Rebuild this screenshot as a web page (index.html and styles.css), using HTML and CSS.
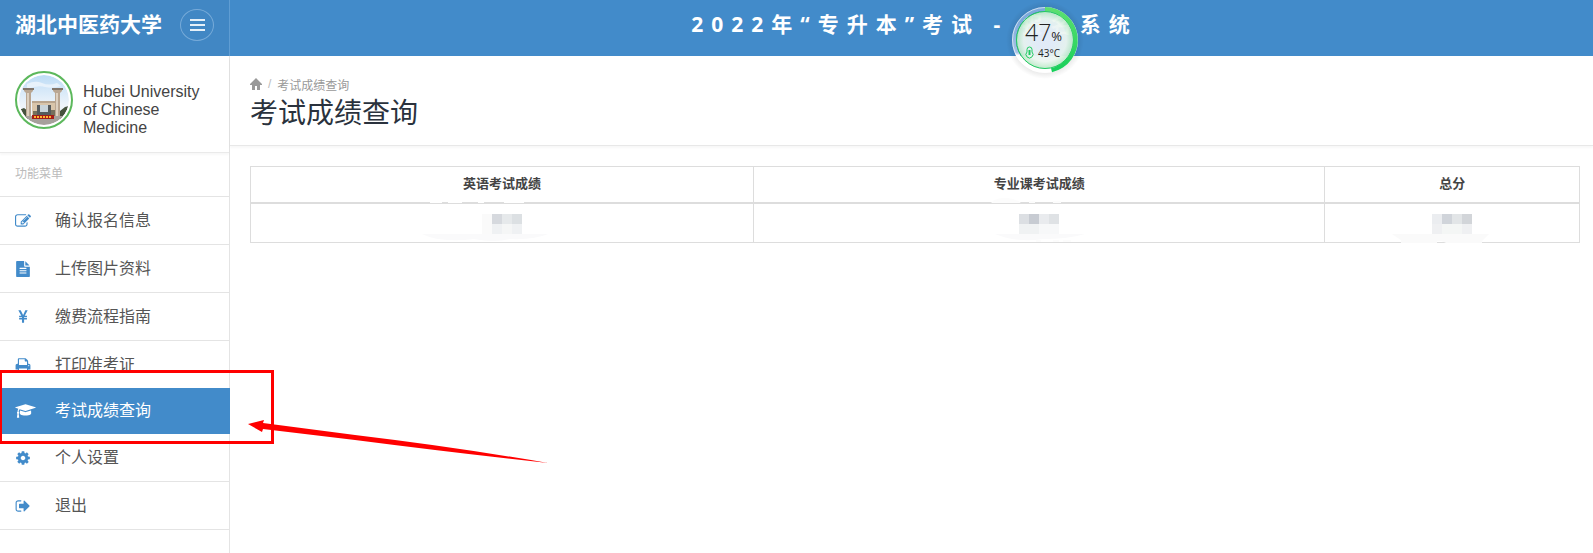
FILE: index.html
```html
<!DOCTYPE html>
<html lang="zh-CN">
<head>
  <meta charset="UTF-8">
  <title>考试成绩查询</title>
  <meta name="viewport" content="width=device-width, initial-scale=1.0">
  <link rel="stylesheet" href="styles.css">
</head>
<body>
  <header class="topbar">
    <div class="brand">
      <a class="brand-name" href="#">湖北中医药大学</a>
      <button class="menu-toggle" type="button" aria-label="菜单">
        <svg width="15" height="12" viewBox="0 0 15 12"><path d="M0 0h15v2H0zM0 5h15v2H0zM0 10h15v2H0z"/></svg>
      </button>
    </div>
    <h3 class="system-title">2022年“专升本”考试 - 报名系统</h3>
  </header>

  <div class="layout">
    <aside class="sidebar">
      <div class="profile">
        <svg class="avatar" viewBox="0 0 50 50" aria-hidden="true">
          <defs>
            <clipPath id="round"><circle cx="25" cy="25" r="25"/></clipPath>
            <linearGradient id="sky" x1="0" y1="0" x2="0" y2="1">
              <stop offset="0" stop-color="#bddcf6"/>
              <stop offset="0.6" stop-color="#eef4fa"/>
            </linearGradient>
          </defs>
          <g clip-path="url(#round)">
            <rect width="50" height="50" fill="url(#sky)"/>
            <path d="M8 9q8-4 15-1t15 0l4 3q-9 3-16 1t-18 2z" fill="#e8f2fb"/>
            <path d="M0 35l5-2 4 3v9H0zM41 36l5-4 4-1v14h-9z" fill="#46523d"/>
            <path d="M13 27h24v14H13z" fill="#d9c5aa"/>
            <path d="M13 26h24v2H13z" fill="#b9a58e"/>
            <path d="M18 30h14v12H18z" fill="#555a5c"/>
            <path d="M21 30h8v7h-8z" fill="#c9d4da"/>
            <path d="M14 36h4v6h-4zM32 35h4v7h-4z" fill="#76705c"/>
            <path d="M5 14h9v2l-2 2v24H7V18l-2-2zM34 14h9v2l-2 2v24h-5V18l-2-2z" fill="#b9a692"/>
            <path d="M8 18h2v24H8zM37 18h2v24h-2z" fill="#ddd0c0"/>
            <path d="M4 13h11v2H4zM33 13h11v2H33z" fill="#82766b"/>
            <path d="M0 41h50v9H0z" fill="#a6a09b"/>
            <path d="M13 40h22v4H13z" fill="#a51d18"/>
            <path d="M15 41h2v2h-2zM18 41h2v2h-2zM21 41h2v2h-2zM24 41h2v2h-2zM27 41h2v2h-2zM30 41h2v2h-2z" fill="#ffb52e"/>
          </g>
        </svg>
        <h4 class="profile-name">Hubei University of Chinese Medicine</h4>
      </div>
      <h5 class="menu-title">功能菜单</h5>
      <ul class="menu">
        <li><a href="#">
          <svg class="icon" viewBox="0 0 1792 1792"><path d="M888 1184l116-116-152-152-116 116v56h96v96h56zm440-720q-16-16-33 1l-350 350q-17 17-1 33t33-1l350-350q17-17 1-33zm80 594v190q0 119-84.5 203.5t-203.5 84.5h-832q-119 0-203.5-84.5t-84.5-203.5v-832q0-119 84.5-203.5t203.5-84.5h832q63 0 117 25 15 7 18 23 3 17-9 29l-49 49q-14 14-32 8-23-6-45-6h-832q-66 0-113 47t-47 113v832q0 66 47 113t113 47h832q66 0 113-47t47-113v-126q0-13 9-22l64-64q15-15 35-7t20 29zm-96-738l288 288-672 672h-288v-288zm444 132l-92 92-288-288 92-92q28-28 68-28t68 28l152 152q28 28 28 68t-28 68z"/></svg>
          <span>确认报名信息</span></a></li>
        <li><a href="#">
          <svg class="icon" viewBox="0 0 1792 1792"><path d="M1596 476q14 14 28 36h-472v-472q22 14 36 28zm-476 164h544v1056q0 40-28 68t-68 28h-1344q-40 0-68-28t-28-68v-1600q0-40 28-68t68-28h800v544q0 40 28 68t68 28zm160 736v-64q0-14-9-23t-23-9h-704q-14 0-23 9t-9 23v64q0 14 9 23t23 9h704q14 0 23-9t9-23zm0-256v-64q0-14-9-23t-23-9h-704q-14 0-23 9t-9 23v64q0 14 9 23t23 9h704q14 0 23-9t9-23zm0-256v-64q0-14-9-23t-23-9h-704q-14 0-23 9t-9 23v64q0 14 9 23t23 9h704q14 0 23-9t9-23z"/></svg>
          <span>上传图片资料</span></a></li>
        <li><a href="#">
          <svg class="icon" viewBox="0 0 1792 1792"><path d="M985.500 1536h-172q-13 0-22.500-9t-9.500-23v-330h-288q-13 0-22.500-9t-9.500-23v-103q0-13 9.500-22.500t22.500-9.500h288v-85h-288q-13 0-22.500-9t-9.500-23v-104q0-13 9.500-22.500t22.500-9.500h214l-321-578q-8-16 0-32 10-16 28-16h194q19 0 29 18l215 425q19 38 56 125 10-24 30.500-68t27.500-61l191-420q8-19 29-19h191q17 0 27 16 9 14 1 31l-313 579h215q13 0 22.500 9.500t9.500 22.500v104q0 14-9.500 23t-22.500 9h-290v85h290q13 0 22.500 9.500t9.500 22.500v103q0 14-9.500 23t-22.500 9h-290v330q0 13-9.500 22.500t-22.500 9.500z"/></svg>
          <span>缴费流程指南</span></a></li>
        <li><a href="#">
          <svg class="icon" viewBox="0 0 1792 1792"><path d="M448 1536h896v-256h-896v256zm0-640h896v-384h-160q-40 0-68-28t-28-68v-160h-640v640zm1152 64q0-26-19-45t-45-19-45 19-19 45 19 45 45 19 45-19 19-45zm128 0v416q0 13-9.500 22.500t-22.500 9.500h-224v160q0 40-28 68t-68 28h-960q-40 0-68-28t-28-68v-160h-224q-13 0-22.500-9.500t-9.500-22.500v-416q0-79 56.500-135.500t135.500-56.500h64v-544q0-40 28-68t68-28h672q40 0 88 20t76 48l152 152q28 28 48 76t20 88v256h64q79 0 135.500 56.500t56.500 135.500z"/></svg>
          <span>打印准考证</span></a></li>
        <li class="active"><a href="#">
          <svg class="icon icon-wide" viewBox="0 0 2304 1792"><path d="M1774 836l18 316q4 69-82 128t-235 93.500-323 34.500-323-34.500-235-93.500-82-128l18-316 574 181q22 7 48 7t48-7zm530-324q0 23-22 31l-1120 352q-4 1-10 1t-10-1l-652-206q-43 34-71 111.500t-34 178.500q63 36 63 109 0 69-58 107l58 433q2 14-8 25-9 11-24 11h-192q-15 0-24-11-10-11-8-25l58-433q-58-38-58-107 0-73 65-111 11-207 98-330l-333-104q-22-8-22-31t22-31l1120-352q4-1 10-1t10 1l1120 352q22 8 22 31z"/></svg>
          <span>考试成绩查询</span></a></li>
        <li><a href="#">
          <svg class="icon" viewBox="0 0 1792 1792"><path d="M1152 896q0-106-75-181t-181-75-181 75-75 181 75 181 181 75 181-75 75-181zm512-109v222q0 12-8 23t-20 13l-185 28q-19 54-39 91 35 50 107 138 10 12 10 25t-9 23q-27 37-99 108t-94 71q-12 0-26-9l-138-108q-44 23-91 38-16 136-29 186-7 28-36 28h-222q-14 0-24.500-8.500t-11.500-21.500l-28-184q-49-16-90-37l-141 107q-10 9-25 9-14 0-25-11-126-114-165-168-7-10-7-23 0-12 8-23 15-21 51-66.500t54-70.500q-27-50-41-99l-183-27q-13-2-21-12.500t-8-23.500v-222q0-12 8-23t19-13l186-28q14-46 39-92-40-57-107-138-10-12-10-24 0-10 9-23 26-36 98.500-107.500t94.500-71.500q13 0 26 10l138 107q44-23 91-38 16-136 29-186 7-28 36-28h222q14 0 24.500 8.500t11.500 21.500l28 184q49 16 90 37l142-107q9-9 24-9 13 0 25 10 129 119 165 170 7 8 7 22 0 12-8 23-15 21-51 66.500t-54 70.500q26 50 41 98l183 28q13 2 21 12.500t8 23.500z"/></svg>
          <span>个人设置</span></a></li>
        <li><a href="#">
          <svg class="icon" viewBox="0 0 1792 1792"><path d="M704 1440q0 4 1 20t.5 26.500-3 23.500-10 19.500-20.500 6.500h-320q-119 0-203.500-84.500t-84.500-203.500v-704q0-119 84.500-203.500t203.500-84.500h320q13 0 22.500 9.500t9.500 22.500q0 4 1 20t.5 26.500-3 23.500-10 19.500-20.500 6.500h-320q-66 0-113 47t-47 113v704q0 66 47 113t113 47h312l11.500 1 11.500 3 8 5.500 7 9 2 13.500zm928-544q0 26-19 45l-544 544q-19 19-45 19t-45-19-19-45v-288h-448q-26 0-45-19t-19-45v-384q0-26 19-45t45-19h448v-288q0-26 19-45t45-19 45 19l544 544q19 19 19 45z"/></svg>
          <span>退出</span></a></li>
      </ul>
    </aside>

    <main class="main">
      <div class="page-header">
        <div class="breadcrumb">
          <a href="#" aria-label="首页"><svg width="12" height="12" viewBox="0 0 12 12"><path d="M6 0l6 6v1h-2v5H7V8H5v4H2V7H0V6z"/></svg></a>
          <span class="slash">/</span>
          <span>考试成绩查询</span>
        </div>
        <h1>考试成绩查询</h1>
      </div>
      <div class="content">
        <table class="scores">
          <thead>
            <tr>
              <th class="col-english">英语考试成绩</th>
              <th class="col-major">专业课考试成绩</th>
              <th class="col-total">总分</th>
            </tr>
          </thead>
          <tbody>
            <tr>
              <td>
                <svg class="masked" viewBox="0 0 40 20">
                  <path d="M-60 20H66q-14 6-38 5-16 4-36 0-34 4-52-5z" fill="#fafafb"/>
                  <path d="M-52-13h12v2h-12zM-34-13h14v2h-14zM-4-13h6v2h-6zM22-13h20v2H22z" fill="#fff"/>
                  <path d="M0 0h10v20H0z" fill="#fafafa"/>
                  <path d="M10 0h10v10H10z" fill="#d6d9de"/>
                  <path d="M20 0h10v10H20z" fill="#e6e9eb"/>
                  <path d="M30 0h10v10H30z" fill="#dce0e3"/>
                  <path d="M10 10h10v10H10zM30 10h10v10H30z" fill="#eff1f3"/>
                  <path d="M20 10h10v10H20z" fill="#f5f6f6"/>
                </svg>
              </td>
              <td>
                <svg class="masked" viewBox="0 0 40 20">
                  <path d="M-24 20H66q-16 5-42 5-26 4-48-5z" fill="#fafafb"/>
                  <path d="M-28-11q4-5 14-5t16 5zM10-13h6v2h-6zM34-13h8v2h-8zM17 26h5v2h-5zM34 26h6v2h-6zM44 26h8v2h-8z" fill="#fcfcfc"/>
                  <path d="M0 0h10v10H0z" fill="#dcdfe3"/>
                  <path d="M10 0h10v10H10z" fill="#c7cbd2"/>
                  <path d="M20 0h10v10H20z" fill="#e9ebee"/>
                  <path d="M30 0h10v10H30z" fill="#dfe2e5"/>
                  <path d="M0 10h20v10H0z" fill="#f0f2f3"/>
                  <path d="M20 10h20v10H20z" fill="#f7f8f9"/>
                </svg>
              </td>
              <td>
                <svg class="masked" viewBox="0 0 40 20">
                  <path d="M-40 20H57l-7 7v2H14l-4-2H5v2h-36v-3z" fill="#fafafa"/>
                  <path d="M0 0h10v10H0z" fill="#ebedf0"/>
                  <path d="M10 0h10v10H10z" fill="#d0d4da"/>
                  <path d="M20 0h10v10H20z" fill="#e2e5e7"/>
                  <path d="M30 0h10v10H30z" fill="#d2d5d9"/>
                  <path d="M0 10h10v10H0zM30 10h10v10H30z" fill="#eff0f2"/>
                  <path d="M10 10h20v10H10z" fill="#f4f6f5"/>
                </svg>
              </td>
            </tr>
          </tbody>
        </table>
      </div>
    </main>
  </div>

  <!-- floating system monitor -->
  <div class="monitor">
    <svg class="monitor-ring" viewBox="0 0 80 80">
      <defs>
        <radialGradient id="glass">
          <stop offset="0.3" stop-color="#eaf1fb"/>
          <stop offset="0.75" stop-color="#edf7f1"/>
          <stop offset="1" stop-color="#bdebc9"/>
        </radialGradient>
        <radialGradient id="halo">
          <stop offset="0.8" stop-color="#000" stop-opacity="0.1"/>
          <stop offset="1" stop-color="#000" stop-opacity="0"/>
        </radialGradient>
        <linearGradient id="track" x1="0" y1="0" x2="0" y2="1">
          <stop offset="0.2" stop-color="#7daadb"/>
          <stop offset="0.7" stop-color="#a8c3e5"/>
          <stop offset="0.75" stop-color="#fff"/>
        </linearGradient>
        <linearGradient id="load" x1="0" y1="0" x2="0" y2="1">
          <stop offset="0" stop-color="#5ee070"/>
          <stop offset="1" stop-color="#17cf5a"/>
        </linearGradient>
      </defs>
      <circle cx="40" cy="40" r="39" fill="url(#halo)"/>
      <circle cx="40" cy="40" r="31" fill="none" stroke="url(#track)" stroke-width="4"/>
      <circle cx="40" cy="40" r="32.500" fill="none" stroke="#fff" stroke-opacity="0.6"/>
      <circle cx="40" cy="40" r="28.500" fill="url(#glass)" fill-opacity="0.95" stroke="#1fcb60"/>
      <path d="M40 7a33 33 0 0 1 7 65.200l-1-4A29 29 0 0 0 40 11z" fill="url(#load)"/>
      <g fill="none" stroke="#1fcb60">
        <path d="M22 52v-2.500a2.500 2.500 0 0 1 5 0V52a3.500 3.500 0 1 1-5 0z"/>
        <path d="M24.500 50v5" stroke-width="2"/>
      </g>
    </svg>
    <div class="monitor-load">47<small>%</small></div>
    <div class="monitor-temp">43°C</div>
  </div>

  <!-- callout over the active menu entry -->
  <div class="callout"></div>
  <svg class="callout-arrow" viewBox="0 0 300 46"><path d="M0 6L16 2l-1 3 92 12q100 12 193 28-92-10-193-23L15 11l-1 3z"/></svg>
</body>
</html>
```
FILE: styles.css
```css
* {
  box-sizing: border-box;
}
body {
  margin: 0;
  min-height: 100vh;
  display: flex;
  flex-direction: column;
  position: relative;
  overflow-x: hidden;
  font-family: "Liberation Sans", "Noto Sans CJK SC", sans-serif;
  font-size: 13px;
  color: #444;
  background: #fff;
}
h1, h3, h4, h5 {
  margin: 0;
  font-weight: 400;
}
a {
  color: inherit;
  text-decoration: none;
}

/* top bar */
.topbar {
  display: flex;
  height: 56px;
  background: #428bca;
  color: #fff;
}
.brand {
  flex: 0 0 230px;
  display: flex;
  align-items: flex-start;
  gap: 18px;
  padding: 9px 15px;
  background: #4187c4;
  border-right: 1px solid #5f9dd3;
}
.brand-name {
  font-size: 21px;
  line-height: 32px;
  font-weight: 700;
  white-space: nowrap;
}
.menu-toggle {
  display: flex;
  align-items: center;
  justify-content: center;
  width: 34px;
  height: 32px;
  padding: 0;
  background: none;
  border: 1px solid #77abd9;
  border-radius: 50%;
}
.menu-toggle svg {
  fill: #e6f0f8;
}
.system-title {
  flex: 1;
  padding: 8px 0 0 6px;
  font-family: "Noto Sans", "Noto Sans CJK SC", sans-serif;
  font-size: 21px;
  line-height: 32px;
  font-weight: 700;
  letter-spacing: 8px;
  text-align: center;
}

/* sidebar */
.layout {
  flex: 1;
  display: flex;
}
.sidebar {
  flex: 0 0 230px;
  border-right: 1px solid #e4e4e4;
}
.profile {
  display: flex;
  gap: 10px;
  padding: 15px;
  height: 97px;
  border-bottom: 1px solid #eaeaea;
  box-shadow: 0 2px 2px rgba(0, 0, 0, 0.03);
}
.avatar {
  flex: none;
  width: 58px;
  height: 58px;
  padding: 2px;
  border: 2px solid #5cb85c;
  border-radius: 50%;
}
.profile-name {
  padding-top: 12px;
  font-size: 16px;
  line-height: 18px;
}
.menu-title {
  padding: 0 15px;
  font-size: 12px;
  line-height: 43px;
  color: #bbb;
  border-bottom: 1px solid #e4e4e4;
}
.menu {
  margin: 0;
  padding: 0;
  list-style: none;
}
.menu li {
  border-bottom: 1px solid #e4e4e4;
}
.menu a {
  display: grid;
  grid-template-columns: 40px 1fr;
  align-items: center;
  height: 47px;
  padding: 0 15px;
  font-size: 16px;
  color: #555;
}
.menu span {
  padding-bottom: 4px;
}
.menu .active {
  margin-top: -1px;
  margin-right: -1px;
  border-bottom: 0;
  background: #428bca;
}
.menu .active a {
  height: 46px;
  color: #fff;
}
.icon {
  width: 16px;
  height: 16px;
  fill: #428bca;
}
.icon-wide {
  width: 21px;
}
.active .icon {
  fill: #fff;
}

/* page */
.main {
  flex: 1;
}
.page-header {
  height: 90px;
  padding: 19px 20px;
  border-bottom: 1px solid #e8e8e8;
  box-shadow: 0 2px 2px rgba(0, 0, 0, 0.03);
}
.breadcrumb {
  display: flex;
  align-items: center;
  gap: 6px;
  height: 18px;
  font-size: 12px;
  color: #999;
}
.breadcrumb svg {
  display: block;
  fill: #999;
}
.slash {
  color: #bbb;
}
.page-header h1 {
  font-size: 28px;
  line-height: 42px;
  color: #2a323d;
}
.content {
  padding: 20px 13px 20px 20px;
}
.scores {
  width: 100%;
  border-collapse: collapse;
}
.scores th,
.scores td {
  padding: 0;
  border: 1px solid #ddd;
  text-align: center;
}
.scores th {
  height: 36px;
  padding-bottom: 4px;
  border-bottom-width: 2px;
  font-weight: 700;
}
.scores td {
  height: 40px;
  padding-top: 2px;
}
.col-english {
  width: 37.85%;
}
.col-major {
  width: 43%;
}
.col-total {
  width: 19.15%;
}
.masked {
  display: block;
  width: 40px;
  height: 20px;
  margin: 0 auto;
  overflow: visible;
}

/* floating monitor */
.monitor {
  position: absolute;
  top: 0;
  left: 1005px;
  width: 80px;
  height: 80px;
  font-family: "Open Sans", sans-serif;
  color: #222;
}
.monitor-ring {
  position: absolute;
  inset: 0;
}
.monitor-load {
  position: absolute;
  top: 16px;
  left: 20px;
  font-size: 23px;
  font-weight: 300;
  line-height: 32px;
}
.monitor-load small {
  font-size: 13px;
  font-weight: 400;
}
.monitor-temp {
  position: absolute;
  top: 45px;
  left: 33px;
  font-size: 10px;
  line-height: 16px;
}

/* callout */
.callout {
  position: absolute;
  top: 370px;
  left: -1px;
  width: 275px;
  height: 74px;
  border: 3px solid #f00;
}
.callout-arrow {
  position: absolute;
  top: 418px;
  left: 248px;
  width: 300px;
  height: 46px;
  fill: #f00;
}
```
